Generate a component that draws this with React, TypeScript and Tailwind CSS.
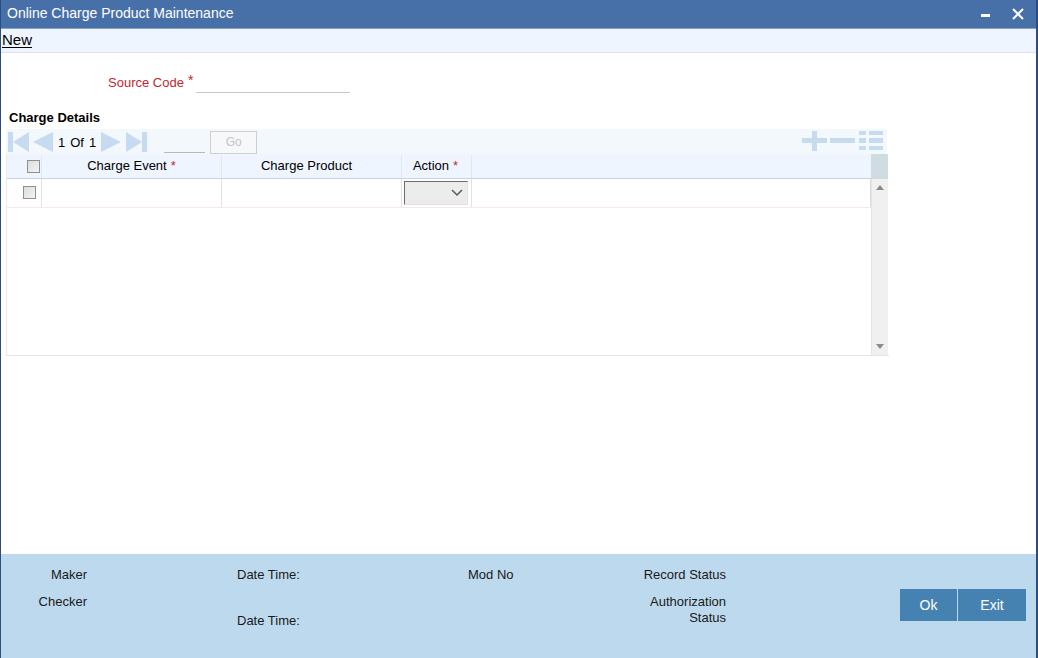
import React from "react";

const font = { fontFamily: '"Liberation Sans", Arial, sans-serif' };

function PagerIcons() {
  const c = "#c6daf0";
  return (
    <div className="flex items-center">
      <svg width="22" height="22" viewBox="0 0 22 22" className="ml-[2px] mt-[2px]">
        <rect x="0" y="1" width="5" height="20" fill={c} />
        <polygon points="21,1 21,21 5,11" fill={c} />
      </svg>
      <svg width="21" height="22" viewBox="0 0 21 22" className="ml-[3px] mt-[2px]">
        <polygon points="20,1 20,21 0,11" fill={c} />
      </svg>
      <span className="ml-[4px] mt-[3px] flex gap-[5px] text-[13px] text-black">
        <span>1</span>
        <span>Of</span>
        <span>1</span>
      </span>
      <svg width="21" height="22" viewBox="0 0 21 22" className="ml-[5px] mt-[2px]">
        <polygon points="0,1 0,21 20,11" fill={c} />
      </svg>
      <svg width="22" height="22" viewBox="0 0 22 22" className="ml-[4px] mt-[2px]">
        <polygon points="0,1 0,21 16,11" fill={c} />
        <rect x="16" y="1" width="5" height="20" fill={c} />
      </svg>
    </div>
  );
}

function RowIcons() {
  const c = "#c6daf0";
  return (
    <svg width="84" height="22" viewBox="0 0 84 22" className="mr-[1px]">
      <rect x="0" y="8" width="25" height="5" fill={c} />
      <rect x="10" y="1" width="5" height="20" fill={c} />
      <rect x="28" y="8" width="25" height="5" fill={c} />
      <rect x="57" y="1" width="7" height="4" fill={c} />
      <rect x="67" y="1" width="14" height="4" fill={c} />
      <rect x="57" y="8" width="7" height="5" fill={c} />
      <rect x="67" y="8" width="14" height="5" fill={c} />
      <rect x="57" y="16" width="7" height="4" fill={c} />
      <rect x="67" y="16" width="14" height="4" fill={c} />
    </svg>
  );
}

function Checkbox() {
  return (
    <span className="inline-block h-[13px] w-[13px] border border-[#8f8f8f] bg-gradient-to-br from-[#dcdcdc] to-[#f4f4f4]" />
  );
}

export default function App() {
  return (
    <div
      style={font}
      className="flex h-[658px] w-[1038px] flex-col overflow-hidden border-l border-r-2 border-[#2c4d7f] bg-white text-[13px] text-black"
    >
      {/* title bar */}
      <div className="flex h-[29px] shrink-0 items-center justify-between border-b border-[#8aa2bb] bg-[#4870a8] pb-[1px] pl-[6px] pr-[12px] text-white">
        <span className="text-[14px]">Online Charge Product Maintenance</span>
        <div className="flex items-center gap-[22px]">
          <span className="mt-[4px] block h-[3px] w-[9px] bg-white" />
          <svg width="12" height="12" viewBox="0 0 12 12">
            <path d="M1 1 L11 11 M11 1 L1 11" stroke="white" strokeWidth="2" />
          </svg>
        </div>
      </div>

      {/* toolbar */}
      <div className="flex h-[24px] shrink-0 items-center border-b border-[#dde3ea] bg-[#eef5fe] pl-px">
        <span className="text-[15px] underline underline-offset-2">New</span>
      </div>

      {/* body */}
      <div className="flex flex-1 flex-col">
        <div className="mt-[20px] flex h-[20px] items-start pl-[107px]">
          <span className="text-[13px] text-[#c4262e]">Source Code</span>
          <span className="ml-[4px] text-[14px] leading-[14px] text-[#c4262e]">*</span>
          <span className="ml-[3px] mt-[19px] block h-px w-[154px] bg-[#c8c8c8]" />
        </div>

        <div className="ml-[8px] mt-[15px] text-[13px] font-bold">Charge Details</div>

        <div className="ml-[5px] mt-[1px] w-[883px]">
          {/* pager */}
          <div className="flex h-[25px] w-[881px] items-center justify-between bg-[#f3f8fd]">
            <div className="flex items-center">
              <PagerIcons />
              <span className="ml-[16px] mt-[22px] block h-px w-[41px] bg-[#b9b9b9]" />
              <button className="ml-[5px] mt-[2px] h-[23px] w-[47px] border border-[#cfcfcf] bg-[#f6f8fa] text-[12px] text-[#c4c4c4]">
                Go
              </button>
            </div>
            <RowIcons />
          </div>

          {/* table */}
          <div className="flex h-[202px] border-b border-[#e6e6e6]">
            <div className="flex w-[865px] flex-col border-l border-[#eaeaea]">
              <div className="flex h-[25px] border-b border-[#c8d3df] bg-[#eef5fe] pt-[1px]">
                <div className="flex w-[35px] items-center justify-center border-r border-[#dfe7f0] pl-[18px]">
                  <Checkbox />
                </div>
                <div className="flex w-[180px] items-center justify-center border-r border-[#dfe7f0]">
                  Charge Event <span className="ml-[4px] text-[#c4262e]">*</span>
                </div>
                <div className="flex w-[180px] items-center justify-center border-r border-[#dfe7f0] pr-[10px]">
                  Charge Product
                </div>
                <div className="flex w-[70px] items-center justify-center border-r border-[#dfe7f0] pr-[2px]">
                  Action <span className="ml-[4px] text-[#c4262e]">*</span>
                </div>
                <div className="flex-1" />
              </div>
              <div className="flex h-[29px] border-b border-[#f4e9e6]">
                <div className="flex w-[35px] items-center justify-center border-r border-[#e2e2e2] pl-[10px]">
                  <Checkbox />
                </div>
                <div className="w-[180px] border-r border-[#e2e2e2]" />
                <div className="w-[180px] border-r border-[#e2e2e2]" />
                <div className="flex w-[70px] items-center border-r border-[#e2e2e2] pl-[2px]">
                  <div className="flex h-[24px] w-[64px] items-center justify-end border border-t-[#6d6d6d] border-l-[#6d6d6d] border-b-[#e2e2e2] border-r-[#e2e2e2] bg-[#ececec] pr-[4px]">
                    <svg width="12" height="8" viewBox="0 0 12 8">
                      <path d="M1 1 L6 6 L11 1" stroke="#5a5a5a" strokeWidth="1.5" fill="none" />
                    </svg>
                  </div>
                </div>
                <div className="flex-1 border-r border-[#dcdcdc]" />
              </div>
              <div className="flex-1" />
            </div>
            <div className="flex w-[17px] flex-col">
              <div className="h-[25px] bg-[#cfdde2]" />
              <div className="flex flex-1 flex-col items-center justify-between border-l border-[#e4e4e4] bg-[#f0f0f0] py-[6px]">
                <svg width="8" height="5" viewBox="0 0 8 5">
                  <polygon points="0,5 8,5 4,0" fill="#8a8a8a" />
                </svg>
                <svg width="8" height="5" viewBox="0 0 8 5">
                  <polygon points="0,0 8,0 4,5" fill="#8a8a8a" />
                </svg>
              </div>
            </div>
          </div>
        </div>
      </div>

      {/* footer */}
      <div className="flex h-[104px] shrink-0 bg-[#bdd9ed] pt-[13px] text-[13px] text-[#1a1a1a]">
        <div className="flex w-[86px] shrink-0 flex-col items-end">
          <span className="leading-[16px]">Maker</span>
          <span className="mt-[11px] leading-[16px]">Checker</span>
        </div>
        <div className="ml-[150px] flex w-[120px] shrink-0 flex-col">
          <span className="leading-[16px]">Date Time:</span>
          <span className="mt-[30px] leading-[16px]">Date Time:</span>
        </div>
        <div className="ml-[111px] w-[100px] shrink-0 leading-[16px]">Mod No</div>
        <div className="ml-[8px] flex w-[150px] shrink-0 flex-col items-end text-right">
          <span className="leading-[16px]">Record Status</span>
          <span className="mt-[11px] leading-[16px]">
            Authorization
            <br />
            Status
          </span>
        </div>
        <div className="ml-[174px] mt-[22px] flex h-[32px] shrink-0">
          <button className="h-[32px] w-[57px] bg-[#4682b1] text-[14px] text-white">Ok</button>
          <button className="ml-px h-[32px] w-[68px] bg-[#4682b1] text-[14px] text-white">Exit</button>
        </div>
      </div>
    </div>
  );
}
